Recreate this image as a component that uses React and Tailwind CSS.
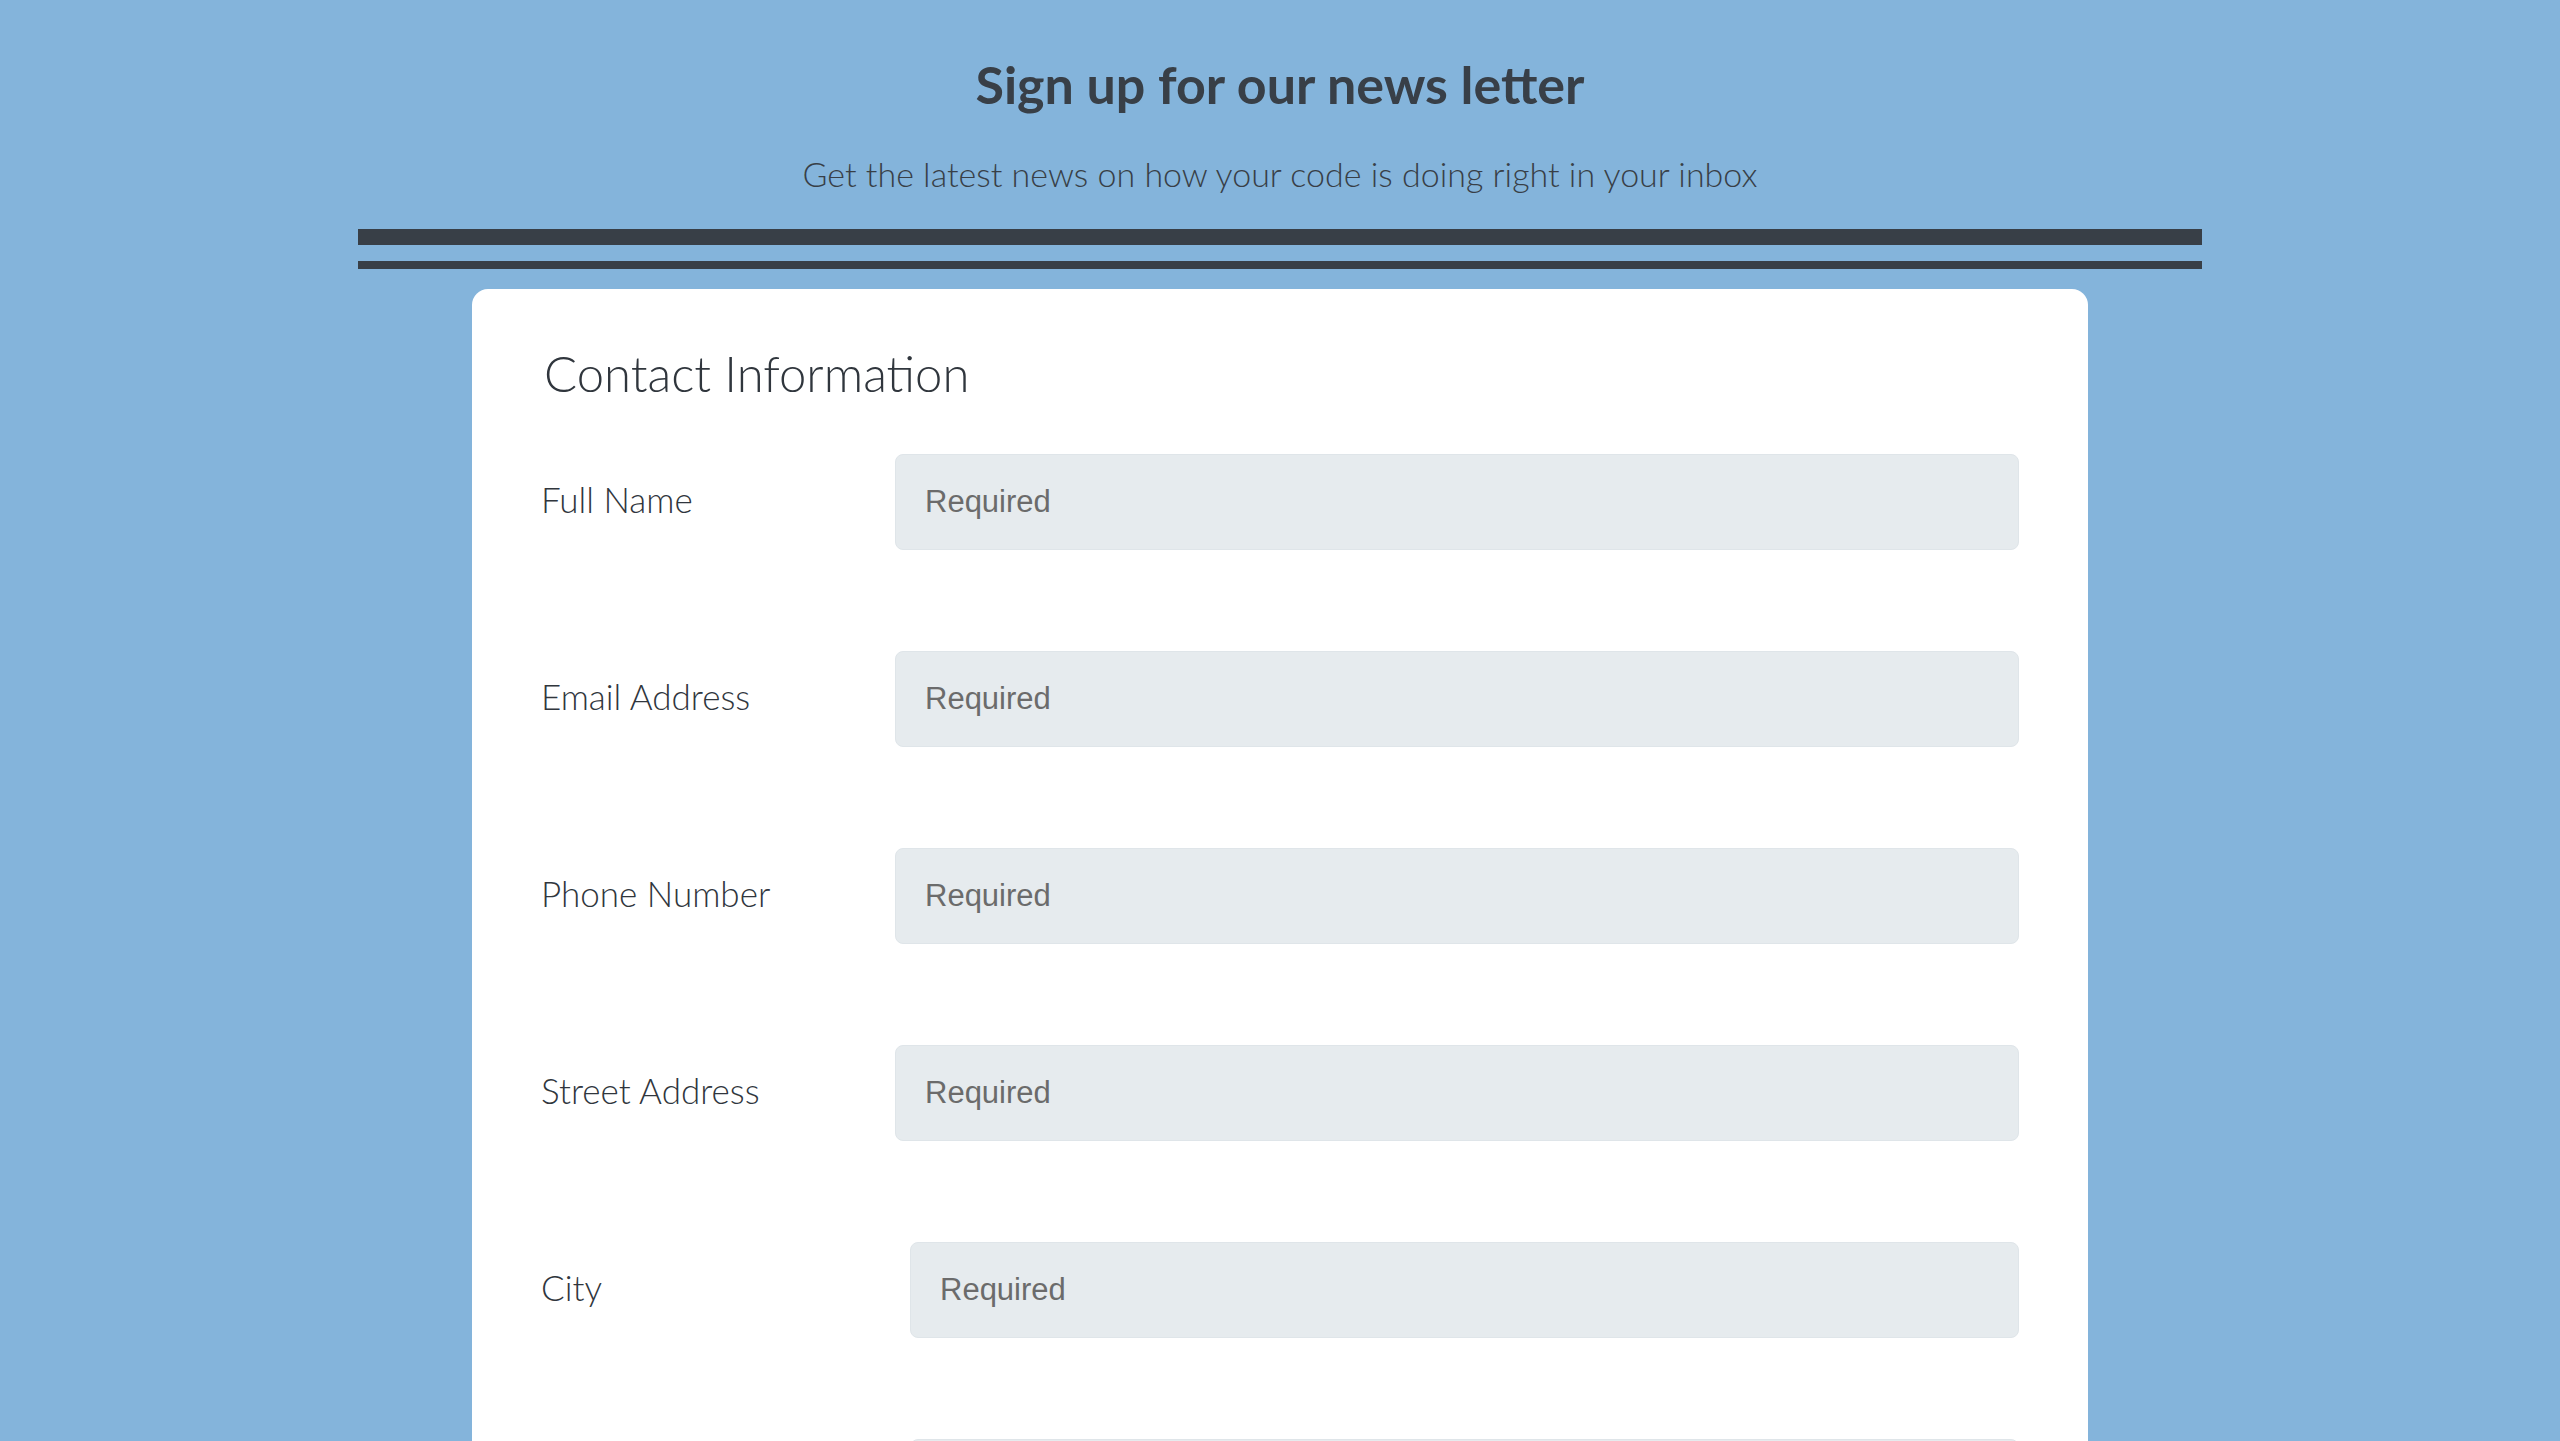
export default function App() {
  const fields = [
    { label: "Full Name", offset: false },
    { label: "Email Address", offset: false },
    { label: "Phone Number", offset: false },
    { label: "Street Address", offset: false },
    { label: "City", offset: true },
  ];
  return (
    <div className="h-[1441px] bg-[#84b4db] overflow-hidden" style={{ fontFamily: "Lato, 'Open Sans', sans-serif" }}>
      <div className="flex flex-col items-center">
        <h1 className="shrink-0 mt-[54px] text-[52px] leading-[60px] font-bold text-[#383f47]">Sign up for our news letter</h1>
        <p className="shrink-0 mt-[40px] text-[34px] leading-[40px] font-light text-[#383f47]">Get the latest news on how your code is doing right in your inbox</p>
        <div className="shrink-0 mt-[35px] w-[1844px] h-[16px] bg-[#383f47]"></div>
        <div className="shrink-0 mt-[16px] w-[1844px] h-[8px] bg-[#383f47]"></div>
        <div className="shrink-0 mt-[20px] w-[1616px] bg-white rounded-t-[16px] pl-[72px] pr-[69px] pt-[54px] pb-[100px]">
          <h2 className="text-[49px] leading-[60px] font-light text-[#30363d]">Contact Information</h2>
          <div className="mt-[51px] flex flex-col gap-[101px]">
            {fields.map((f) => (
              <div key={f.label} className="flex items-center">
                <label className="w-[354px] -ml-[3px] mb-[5px] shrink-0 text-[35px] font-light text-[#30363d]">{f.label}</label>
                <div className={`flex-1 h-[96px] rounded-[8px] bg-[#e6ebee] border border-[#dfe5e9] flex items-center pl-[29px] ${f.offset ? "ml-[15px]" : ""}`}>
                  <span className="text-[31px] text-[#6b6b6b]" style={{ fontFamily: "'Liberation Sans', Arial, sans-serif" }}>Required</span>
                </div>
              </div>
            ))}
            <div className="flex items-center">
              <div className="w-[354px] -ml-[3px] shrink-0"></div>
              <div className="flex-1 ml-[15px] h-[96px] rounded-[8px] bg-[#e6ebee] border border-[#dfe5e9]"></div>
            </div>
          </div>
        </div>
      </div>
    </div>
  );
}
